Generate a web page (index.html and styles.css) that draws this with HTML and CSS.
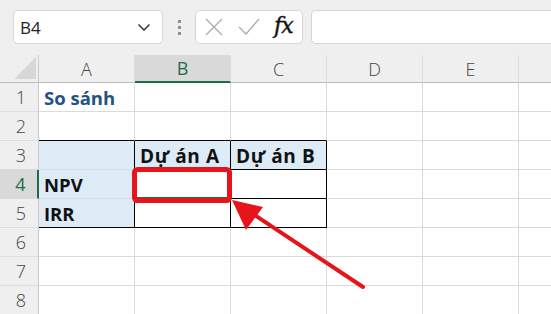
FILE: index.html
```html
<!DOCTYPE html>
<html>
<head>
<meta charset="utf-8">
<link rel="stylesheet" href="styles.css">
</head>
<body>
<div class="app">
  <div class="toolbar">
    <div class="namebox">
      <span class="ref">B4</span>
      <svg class="chev" width="14" height="9" viewBox="0 0 14 9"><path d="M1.5 1.5 L7 7 L12.5 1.5" fill="none" stroke="#333" stroke-width="1.5"/></svg>
    </div>
    <div class="dots"><i></i><i></i><i></i></div>
    <div class="fnbox">
      <svg width="20" height="20" viewBox="0 0 20 20"><path d="M2 2 L18 18 M18 2 L2 18" stroke="#ababab" stroke-width="1.3" fill="none"/></svg>
      <svg width="24" height="20" viewBox="0 0 24 20"><path d="M2 10 L9 17 L22 2" stroke="#ababab" stroke-width="1.3" fill="none"/></svg>
      <span class="fx">fx</span>
    </div>
    <div class="formula"></div>
  </div>
  <div class="sheet">
    <div class="corner"><svg width="22" height="22" viewBox="0 0 22 22"><path d="M22 0 L22 22 L0 22 Z" fill="#d7d7d7"/></svg></div>
    <div class="ch">A</div><div class="ch sel">B</div><div class="ch">C</div><div class="ch">D</div><div class="ch">E</div><div class="ch last"></div>

    <div class="rh">1</div><div class="c title">So sánh</div><div class="c"></div><div class="c"></div><div class="c"></div><div class="c"></div><div class="c last"></div>
    <div class="rh">2</div><div class="c bb"></div><div class="c bb"></div><div class="c bb"></div><div class="c"></div><div class="c"></div><div class="c last"></div>
    <div class="rh">3</div><div class="c fill br soft"></div><div class="c fill br bb b wide">Dự án A</div><div class="c fill br bb b wide">Dự án B</div><div class="c"></div><div class="c"></div><div class="c last"></div>
    <div class="rh rsel">4</div><div class="c fill br soft b">NPV</div><div class="c br bb active"></div><div class="c br bb"></div><div class="c"></div><div class="c"></div><div class="c last"></div>
    <div class="rh">5</div><div class="c fill br bb b">IRR</div><div class="c br bb"></div><div class="c br bb"></div><div class="c"></div><div class="c"></div><div class="c last"></div>
    <div class="rh">6</div><div class="c"></div><div class="c"></div><div class="c"></div><div class="c"></div><div class="c"></div><div class="c last"></div>
    <div class="rh">7</div><div class="c"></div><div class="c"></div><div class="c"></div><div class="c"></div><div class="c"></div><div class="c last"></div>
    <div class="rh">8</div><div class="c"></div><div class="c"></div><div class="c"></div><div class="c"></div><div class="c"></div><div class="c last"></div>

    <svg class="annot" width="551" height="259" viewBox="0 55 551 259">
      <rect x="134.5" y="169.5" width="95" height="31" rx="3" fill="none" stroke="#e8141b" stroke-width="5"/>
      <line x1="363" y1="287" x2="250" y2="212" stroke="#e8141b" stroke-width="4" stroke-linecap="round"/>
      <path d="M232 200 L263 207 L246 230 Z" fill="#e8141b"/>
    </svg>
  </div>
</div>
</body>
</html>
```

FILE: styles.css
```css
html, body {
  margin: 0;
  padding: 0;
  background: #efefef;
}
.app {
  width: 551px;
  height: 314px;
  overflow: hidden;
  font-family: "Open Sans", "Liberation Sans", sans-serif;
}
.toolbar {
  height: 55px;
  box-sizing: border-box;
  padding: 10px 0 0 13px;
  display: flex;
  align-items: flex-start;
}
.namebox {
  width: 150px;
  height: 34px;
  box-sizing: border-box;
  background: #fff;
  border: 1px solid #d6d6d6;
  border-radius: 5px;
  display: flex;
  align-items: center;
  justify-content: space-between;
  padding: 0 11px 0 6px;
}
.ref {
  font-size: 17px;
  color: #222;
}
.dots {
  width: 32px;
  height: 34px;
  display: flex;
  flex-direction: column;
  align-items: center;
  justify-content: center;
  gap: 3px;
}
.dots i {
  width: 3px;
  height: 3px;
  background: #8f8f8f;
  display: block;
}
.fnbox {
  width: 108px;
  height: 34px;
  box-sizing: border-box;
  background: #fff;
  border: 1px solid #d6d6d6;
  border-radius: 5px;
  display: flex;
  align-items: center;
  padding: 0 6px 0 8px;
  gap: 13px;
}
.fx {
  font-family: "DejaVu Serif", "Liberation Serif", serif;
  font-style: italic;
  font-size: 22px;
  color: #111;
  -webkit-text-stroke: 0.4px #111;
  margin-top: -3px;
  letter-spacing: -1px;
}
.formula {
  flex: 1;
  margin-left: 8px;
  height: 34px;
  box-sizing: border-box;
  background: #fff;
  border: 1px solid #d6d6d6;
  border-right: none;
  border-radius: 5px 0 0 5px;
}
.sheet {
  position: relative;
  display: grid;
  grid-template-columns: 39px 96px 96px 96px 96px 96px 40px;
  grid-template-rows: 28px repeat(8, 29px);
}
.corner {
  border-right: 1px solid #c9c9c9;
  border-bottom: 1px solid #bdbdbd;
  display: flex;
  align-items: flex-end;
  justify-content: flex-end;
  padding: 0 2px 3px 0;
}
.ch {
  border-right: 1px solid #dcdcdc;
  border-bottom: 1px solid #bdbdbd;
  display: flex;
  align-items: center;
  justify-content: center;
  font-size: 18px;
  color: #444;
  font-family: "Open Sans", "Noto Sans", sans-serif;
  font-weight: 300;
}
.ch.sel {
  background: #d9d9d9;
  color: #1e6e42;
  border-bottom: 2px solid #1e6e42;
  font-weight: 400;
}
.rh {
  background: #efefef;
  border-right: 1px solid #c9c9c9;
  border-bottom: 1px solid #dcdcdc;
  display: flex;
  align-items: center;
  justify-content: center;
  padding-left: 4px;
  font-size: 18px;
  font-weight: 300;
  color: #444;
}
.rh.rsel {
  background: #d9d9d9;
  color: #1e6e42;
  border-right: 2px solid #1e6e42;
  font-weight: 400;
}
.c {
  background: #fff;
  border-right: 1px solid #dadada;
  border-bottom: 1px solid #dadada;
  display: flex;
  align-items: flex-end;
  padding: 0 0 1px 5px;
  font-size: 18.5px;
  line-height: 24px;
  color: #111;
  white-space: nowrap;
}
.c.last, .ch.last {
  border-right: none;
}
.c.title {
  font-weight: 700;
  color: #1f5285;
}
.c.b {
  font-weight: 700;
}
.c.b.wide {
  font-size: 19px;
  letter-spacing: 0.6px;
}
.c.fill {
  background: #ddebf7;
}
.c.br {
  border-right: 1px solid #000;
}
.c.bb {
  border-bottom: 1px solid #000;
}
.c.soft {
  border-bottom: 1px solid #d3dfeb;
}
.c.active {
  box-shadow: inset 0 0 0 1px #1e6e42;
}
.annot {
  position: absolute;
  left: 0;
  top: 0;
  pointer-events: none;
}
```
